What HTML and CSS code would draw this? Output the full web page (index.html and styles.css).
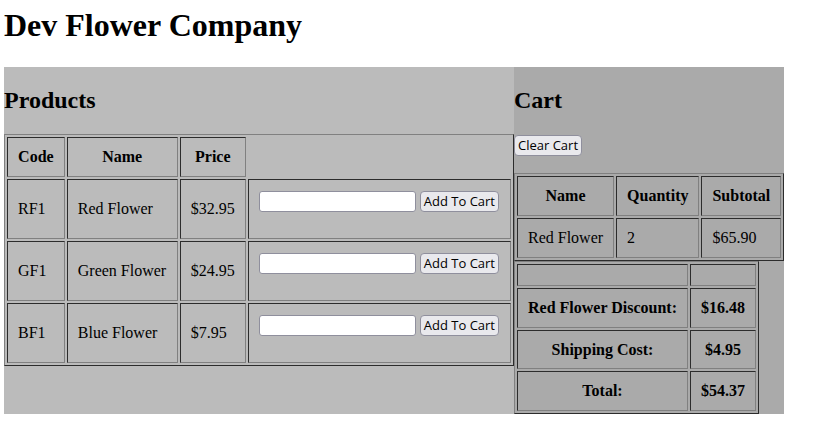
FILE: index.html
```html
<!DOCTYPE html>
<html>
<head>
<meta charset="utf-8">
<title>Dev Flower Company</title>
<link rel="stylesheet" href="styles.css">
</head>
<body>
<h1 class="title">Dev Flower Company</h1>
<div class="shop">
  <div class="products">
    <h2 class="section-title">Products</h2>
    <table class="grid products-table">
      <tr>
        <th>Code</th>
        <th>Name</th>
        <th>Price</th>
      </tr>
      <tr>
        <td>RF1</td>
        <td>Red Flower</td>
        <td>$32.95</td>
        <td><form class="add-form"><input class="qty" type="text"><button class="btn btn-add" type="button">Add To Cart</button></form></td>
      </tr>
      <tr>
        <td>GF1</td>
        <td>Green Flower</td>
        <td>$24.95</td>
        <td><form class="add-form"><input class="qty" type="text"><button class="btn btn-add" type="button">Add To Cart</button></form></td>
      </tr>
      <tr>
        <td>BF1</td>
        <td>Blue Flower</td>
        <td>$7.95</td>
        <td><form class="add-form"><input class="qty" type="text"><button class="btn btn-add" type="button">Add To Cart</button></form></td>
      </tr>
    </table>
  </div>
  <div class="cart">
    <h2 class="section-title">Cart</h2>
    <form class="clear-form"><button class="btn btn-clear" type="button">Clear Cart</button></form>
    <table class="grid cart-table">
      <tr>
        <th>Name</th>
        <th>Quantity</th>
        <th>Subtotal</th>
      </tr>
      <tr>
        <td>Red Flower</td>
        <td>2</td>
        <td>$65.90</td>
      </tr>
    </table>
    <table class="grid totals-table">
      <tr>
        <th></th>
        <th></th>
      </tr>
      <tr>
        <th>Red Flower Discount:</th>
        <th>$16.48</th>
      </tr>
      <tr>
        <th>Shipping Cost:</th>
        <th>$4.95</th>
      </tr>
      <tr>
        <th>Total:</th>
        <th>$54.37</th>
      </tr>
    </table>
  </div>
</div>
</body>
</html>
```
FILE: styles.css
```css
body {
  margin: 0;
  padding: 0 4px;
  font-family: "Liberation Serif", "Times New Roman", serif;
  font-size: 16px;
  color: #000;
  background: #fff;
}

.title {
  font-size: 32px;
  font-weight: bold;
  margin: 7px 0 23px 0;
}

.shop {
  display: flex;
  align-items: stretch;
}

.products {
  width: 510px;
  background: #bbbbbb;
}

.cart {
  flex: none;
  background: #aaaaaa;
}

.section-title {
  font-size: 24px;
  font-weight: bold;
  margin: 20px 0;
}

.grid {
  border: 1px outset #808080;
  border-spacing: 2px;
}

.grid th,
.grid td {
  border: 1px inset #808080;
  padding: 10px;
  vertical-align: middle;
}

.grid th {
  text-align: center;
  font-weight: bold;
}

.grid td {
  text-align: left;
}

.products-table {
  width: 100%;
}

.totals-table th {
  line-height: 17.5px;
}

.add-form {
  display: flex;
  align-items: flex-start;
  gap: 4px;
  padding-top: 1px;
  margin: 0 0 16px 0;
}

.clear-form {
  display: flex;
  padding-top: 1px;
  margin: 0 0 17px 0;
}

.qty {
  box-sizing: border-box;
  width: 157px;
  height: 21px;
  margin: 0;
  padding: 1px 3px;
  border: 1px solid #8f8f9d;
  border-radius: 3px;
  background: #fff;
  font-family: "Open Sans", "Liberation Sans", sans-serif;
  font-size: 13px;
}

.btn {
  box-sizing: border-box;
  height: 21px;
  margin: 0;
  padding: 0;
  border: 1px solid #8f8f9d;
  border-radius: 4px;
  background: #e9e9ed;
  color: #000;
  font-family: "Open Sans", "Liberation Sans", sans-serif;
  font-size: 13px;
  line-height: 19px;
  text-align: center;
  white-space: nowrap;
}

.btn-add {
  width: 79px;
}

.btn-clear {
  width: 68px;
}
```
